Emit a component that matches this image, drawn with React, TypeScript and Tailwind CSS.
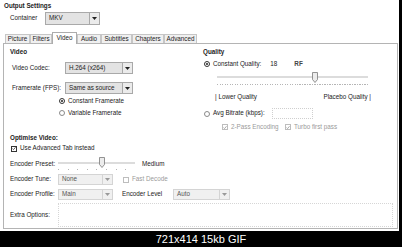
import clsx from "clsx";

const Sel = ({ w, text, disabled }: { w: string; text: string; disabled?: boolean }) => (
  <div
    className={clsx(
      "flex h-full border",
      w,
      disabled ? "border-[#d4d4d4] bg-[#f0f0f0] text-[#555]" : "border-[#a9a9a9] bg-[#e3e3e3]"
    )}
  >
    <span className="flex-1 pl-[3px] flex items-center">{text}</span>
    <span
      className={clsx(
        "w-[10px] flex items-center justify-center border-l",
        disabled ? "border-[#d4d4d4]" : "border-[#a9a9a9] bg-[#ebebeb]"
      )}
    >
      <svg width="5" height="3" viewBox="0 0 5 3">
        <path d="M0 0 H5 L2.5 3 Z" fill={disabled ? "#999" : "#222"} />
      </svg>
    </span>
  </div>
);

const Radio = ({ on, label }: { on?: boolean; label: string }) => (
  <div className="flex items-center h-full gap-[3px]">
    <span
      className={clsx(
        "w-[6px] h-[6px] rounded-full border flex items-center justify-center bg-white",
        on ? "border-[#333]" : "border-[#8a8a8a]"
      )}
    >
      {on && <span className="w-[2.5px] h-[2.5px] rounded-full bg-[#222]" />}
    </span>
    <span>{label}</span>
  </div>
);

const Check = ({ label, checked, disabled }: { label: string; checked?: boolean; disabled?: boolean }) => (
  <div className={clsx("flex items-center h-full gap-[3px]", disabled && "text-[#9a9a9a]")}>
    <span
      className={clsx(
        "w-[6px] h-[6px] border bg-white flex items-center justify-center",
        disabled ? "border-[#bdbdbd]" : "border-[#333]"
      )}
    >
      {checked && (
        <svg width="5" height="5" viewBox="0 0 5 5">
          <path d="M0.6 2.6 L1.9 3.9 L4.4 0.9" fill="none" stroke={disabled ? "#8a8a8a" : "#222"} strokeWidth="0.9" />
        </svg>
      )}
    </span>
    <span>{label}</span>
  </div>
);

const Thumb = () => (
  <svg width="6" height="11" viewBox="0 0 6 11">
    <path d="M0.5 0.5 H5.5 V7.5 L3 10.5 L0.5 7.5 Z" fill="#ececec" stroke="#7a7a7a" strokeWidth="0.8" />
  </svg>
);

const tabs = [
  { name: "Picture", w: "w-[25px]" },
  { name: "Filters", w: "w-[22px]" },
  { name: "Video", w: "w-[25px]", active: true },
  { name: "Audio", w: "w-[24px]" },
  { name: "Subtitles", w: "w-[31px]" },
  { name: "Chapters", w: "w-[32px]" },
  { name: "Advanced", w: "w-[33px]" },
];

export default function App() {
  return (
    <div className="w-[402px] h-[247px] bg-black flex flex-col font-['Liberation_Sans',Arial,sans-serif] text-[6.3px] leading-none text-[#222]">
      <div className="flex h-[231px]">
        <div className="w-[399px] bg-white pl-[3px] pt-[3px]">
          <div className="h-[7px] flex items-center pl-[1px] font-bold">Output Settings</div>
          <div className="flex items-center h-[13px] mt-[2px]">
            <span className="ml-[7px] w-[35px]">Container</span>
            <Sel w="w-[55px]" text="MKV" />
          </div>

          <div className="flex items-end h-[11px] mt-[7px] pl-[2px]">
            {tabs.map((t) => (
              <div
                key={t.name}
                className={clsx(
                  "flex items-center justify-center border border-b-0",
                  t.w,
                  t.active
                    ? "h-[12px] -mb-px bg-white border-[#acacac] relative z-10"
                    : "h-[9px] bg-[#f0f0f0] border-[#c6c6c6]"
                )}
              >
                {t.name}
              </div>
            ))}
          </div>

          <div className="w-[395px] h-[186px] border border-[#b4b4b4] flex flex-col">
            <div className="flex h-[89px]">
              {/* left column */}
              <div className="w-[196px] pt-[5px]">
                <div className="h-[7px] flex items-center pl-[6px] font-bold">Video</div>
                <div className="flex items-center h-[12px] mt-[6px] pl-[8px]">
                  <span className="w-[53px]">Video Codec:</span>
                  <Sel w="w-[68px]" text="H.264 (x264)" />
                </div>
                <div className="flex items-center h-[12px] mt-[8px] pl-[8px]">
                  <span className="w-[53px]">Framerate (FPS):</span>
                  <Sel w="w-[68px]" text="Same as source" />
                </div>
                <div className="h-[8px] mt-[3px] pl-[55px]">
                  <Radio on label="Constant Framerate" />
                </div>
                <div className="h-[8px] mt-[4px] pl-[55px]">
                  <Radio label="Variable Framerate" />
                </div>
              </div>

              {/* right column */}
              <div className="flex-1 pt-[5px]">
                <div className="h-[7px] flex items-center pl-[3px] font-bold">Quality</div>
                <div className="h-[8px] mt-[4px] pl-[4px] flex items-center">
                  <Radio on label="Constant Quality:" />
                  <span className="ml-[9px]">18</span>
                  <span className="ml-[17px] font-bold text-[#444]">RF</span>
                </div>
                <div className="h-[16px] mt-[2px] ml-[17px] w-[151px] flex flex-col">
                  <div className="relative h-[13px] flex items-center">
                    <div className="w-full h-[2px] border-y border-[#dcdcdc] bg-[#f4f4f4]" />
                    <div className="absolute left-[95px] top-[2px]">
                      <Thumb />
                    </div>
                  </div>
                  <div className="h-[1px] mt-[1px] w-full bg-[repeating-linear-gradient(90deg,#b5b5b5_0_1px,transparent_1px_2.5px)]" />
                </div>
                <div className="h-[8px] mt-[7px] pl-[15px] w-[171px] flex items-center justify-between">
                  <span>| Lower Quality</span>
                  <span>Placebo Quality |</span>
                </div>
                <div className="h-[11px] mt-[7px] pl-[4px] flex items-center">
                  <div className="w-[68px] h-full">
                    <Radio label="Avg Bitrate (kbps):" />
                  </div>
                  <div className="w-[41px] h-full border border-dotted border-[#cfcfcf]" />
                </div>
                <div className="h-[10px] mt-[3px] pl-[22px] flex items-center">
                  <div className="w-[63px] h-full">
                    <Check checked disabled label="2-Pass Encoding" />
                  </div>
                  <Check checked disabled label="Turbo first pass" />
                </div>
              </div>
            </div>

            {/* optimise video */}
            <div className="pl-[6px] pt-[2px]">
              <div className="h-[7px] flex items-center font-bold">Optimise Video:</div>
              <div className="h-[9px] mt-[2px] pl-[1px]">
                <Check checked label="Use Advanced Tab instead" />
              </div>
              <div className="h-[12px] mt-[5px] flex items-center">
                <span className="w-[48px]">Encoder Preset:</span>
                <div className="w-[77px] h-full flex flex-col">
                  <div className="relative h-[9px] flex items-center">
                    <div className="w-full h-[2px] border-y border-[#dcdcdc] bg-[#f4f4f4]" />
                    <div className="absolute left-[41px] -top-[1px]">
                      <Thumb />
                    </div>
                  </div>
                  <div className="h-[1px] mt-[2px] w-full bg-[repeating-linear-gradient(90deg,#b5b5b5_0_1px,transparent_1px_9.6px)]" />
                </div>
                <span className="ml-[7px]">Medium</span>
              </div>
              <div className="h-[11px] mt-[4px] flex items-center">
                <span className="w-[48px]">Encoder Tune:</span>
                <Sel w="w-[55px]" text="None" disabled />
                <div className="h-full ml-[10px]">
                  <Check disabled label="Fast Decode" />
                </div>
              </div>
              <div className="h-[11px] mt-[4px] flex items-center">
                <span className="w-[48px]">Encoder Profile:</span>
                <Sel w="w-[55px]" text="Main" disabled />
                <span className="ml-[9px] w-[51px]">Encoder Level</span>
                <Sel w="w-[57px]" text="Auto" disabled />
              </div>
              <div className="h-[24px] mt-[3px] flex items-center">
                <span className="w-[48px]">Extra Options:</span>
                <div className="w-[335px] h-full border border-dotted border-[#d6d6d6]" />
              </div>
            </div>
          </div>
        </div>
        <div className="flex-1" />
      </div>
      <div className="h-[16px] flex items-center justify-center text-white text-[11px] font-['Liberation_Sans',Arial,sans-serif]">
        721x414 15kb GIF
      </div>
    </div>
  );
}
